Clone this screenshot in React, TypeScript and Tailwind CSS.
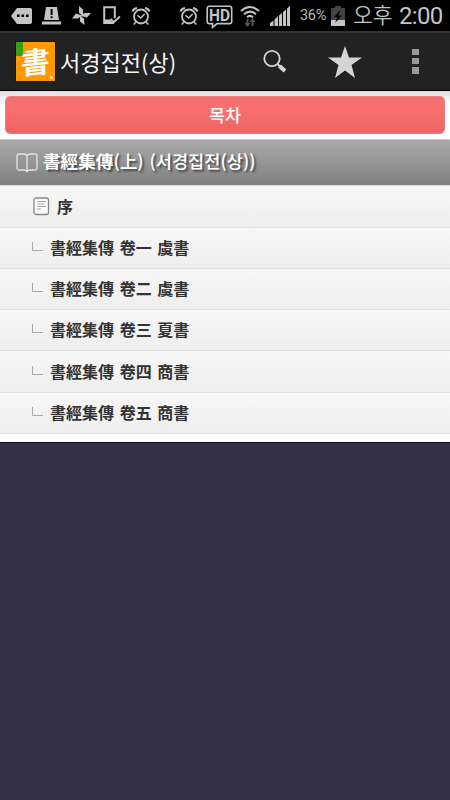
type RowProps = {
    title: string
    className: string
}

const volumes = [
    { title: "書經集傳 卷一 虞書", className: "h-[41px]" },
    { title: "書經集傳 卷二 虞書", className: "h-[41px]" },
    { title: "書經集傳 卷三 夏書", className: "h-[41px]" },
    { title: "書經集傳 卷四 商書", className: "h-[42px]" },
    { title: "書經集傳 卷五 商書", className: "h-[41px]" },
]

function AlarmIcon() {
    return (
        <svg className="shrink-0" width="20" height="20" viewBox="0 0 20 20" fill="none" stroke="#c4c4c4">
            <circle cx="10" cy="10.5" r="7" strokeWidth="1.8" />
            <path d="M6.5 9.2l3.2 2.8 4-4M4.8 16l-2 2.5M15.2 16l2 2.5" strokeWidth="1.5" />
            <path d="M1.5 5.5Q2.5 2.5 6 2M18.5 5.5Q17.5 2.5 14 2" strokeWidth="2" />
        </svg>
    )
}

function StatusBar() {
    return (
        <div className="flex items-center h-[33px] pl-[11px] bg-black border-b-2 border-[#333333]">
            <svg className="shrink-0" width="22" height="18" viewBox="0 0 22 18">
                <path d="M6 1h13q2 0 2 2v12q0 2-2 2H6L0 9z" fill="#c4c4c4" />
                <path d="M6 7.5h2.6v2.6H6zM10.5 7.5h2.6v2.6h-2.6zM15 7.5h2.6v2.6H15z" fill="#000" />
            </svg>
            <svg className="ml-[9px] shrink-0" width="19" height="18" viewBox="0 0 19 18">
                <path d="M4 0h11l2 13H2zM0 14.5h19v3H0z" fill="#c4c4c4" />
                <path d="M8.6 2h2v6h-2zM8.6 9.3h2v2h-2z" fill="#000" />
            </svg>
            <svg className="ml-[11px] shrink-0" width="19" height="19" viewBox="0 0 19 19">
                <path d="M7 0l4 3.5V10L7 7zM19 7l-4 4.5L9 10l3.5-3zM12.5 19L8 15.5V9.5l4 3zM0 12.5L4 7.5 10 9.5 6 12.5z" fill="#c4c4c4" />
            </svg>
            <svg className="ml-[12px] shrink-0" width="18" height="19" viewBox="0 0 18 19">
                <path d="M11 17H1.2V1.2h10.6v11" stroke="#c4c4c4" strokeWidth="2" fill="none" />
                <path d="M2 13.5h5l4 4.5H1z" fill="#c4c4c4" />
                <path d="M7.5 13l3.5 3 6-5.5" stroke="#c4c4c4" strokeWidth="1.8" fill="none" />
            </svg>
            <div className="flex ml-[10px]"><AlarmIcon /></div>
            <div className="flex ml-[28px]"><AlarmIcon /></div>
            <svg className="ml-[7px] mt-[2px] shrink-0" width="27" height="24" viewBox="0 0 27 24">
                <path d="M3.5 1.2h20q2.2 0 2.2 2.2v13q0 2.2-2.2 2.2H11l-4.5 3.8v-3.8h-3q-2.3 0-2.3-2.2v-13q0-2.2 2.3-2.2z" fill="none" stroke="#c4c4c4" strokeWidth="1.6" />
                <text x="13.5" y="15.6" textAnchor="middle" textLength="21" lengthAdjust="spacingAndGlyphs" fontFamily="Roboto, sans-serif" fontWeight="700" fontSize="16" fill="#c4c4c4">HD</text>
            </svg>
            <svg className="ml-[7px] shrink-0" width="20" height="22" viewBox="0 0 20 22" fill="none">
                <path d="M1 6Q10-2 19 6M4 9.3Q10 4 16 9.3M7 12.3Q10 9.5 13 12.3" stroke="#c4c4c4" strokeWidth="2" />
                <path d="M7.5 14v6M12.5 21v-6" stroke="#555" strokeWidth="2" />
                <path d="M4.5 18h6l-3 4zM9.5 17h6l-3-4z" fill="#555" />
            </svg>
            <svg className="ml-[10px] shrink-0" width="20" height="20" viewBox="0 0 20 20" fill="#c4c4c4">
                <path d="M0 20v-3l3.5-2.5V20zM4.5 20v-6.5L8 10v10zM9 20V9.5L12 7v13zM13 20V6l3-2.5V20zM17 20V2.5L20 0v20z" />
            </svg>
            <span className="ml-[10px] mt-[2px] w-[28px] whitespace-nowrap text-[14.5px] leading-none tracking-[-0.3px] text-[#b8b8b8] font-['Roboto',sans-serif]">36%</span>
            <svg className="ml-[3px] shrink-0" width="14" height="20" viewBox="0 0 14 20">
                <path d="M4 0h6v2h4v18H0V2h4z" fill="#444" />
                <path d="M0 14h14v6H0z" fill="#c4c4c4" />
                <path d="M9.5 4L3 11h3.5L4 17l7-7.5H7.5z" fill="#000" />
            </svg>
            <div className="flex items-center ml-[8px] h-[31px] whitespace-nowrap text-[#c4c4c4]">
                <span className="w-[46px] mb-[4px] text-[21.5px] leading-[30px] font-['Noto_Sans_CJK_KR',sans-serif] font-[350]">오후</span>
                <span className="text-[24px] leading-[30px] tracking-[-0.7px] font-['Roboto',sans-serif]">2:00</span>
            </div>
        </div>
    )
}

function ActionBar() {
    return (
        <header className="flex items-center h-[58px] pl-[15px] bg-[#222222] border-b border-black">
            <div className="relative shrink-0 w-[41px] h-[41px] bg-[#ff9900] border border-[#14142a]">
                <div className="w-[7px] h-[14px] bg-[#35a012]"></div>
                <span className="absolute left-[5px] top-0 text-[29px] leading-[36px] font-bold -skew-x-6 -rotate-6 text-white font-['Noto_Sans_CJK_TC',sans-serif]">書</span>
                <div className="absolute right-[2px] bottom-[2px] w-[3px] h-[3px] bg-[#fff0cc] rounded-full"></div>
            </div>
            <h1 className="ml-[4px] mb-px w-[203px] shrink-0 whitespace-nowrap text-[22px] leading-none text-[#f4f4f4] font-['Noto_Sans_CJK_KR',sans-serif]">서경집전(상)</h1>
            <svg className="shrink-0" width="25" height="25" viewBox="0 0 25 25" fill="none" stroke="#d4d4d4">
                <circle cx="9" cy="9.5" r="7.7" strokeWidth="1.8" />
                <path d="M14.5 15l3 3" strokeWidth="2" />
                <path d="M16.5 17l5.5 5" strokeWidth="4.2" />
            </svg>
            <svg className="ml-[40px] shrink-0" width="34" height="32" viewBox="0 0 34 32">
                <path d="M17 0l4 11.5h13L23.5 19 27 32 17 24.5 7 32l3.5-13L0 11.5h13z" fill="#d4d4d4" />
            </svg>
            <div className="flex flex-col gap-[3px] ml-[50px]">
                <div className="w-[7px] h-[6px] bg-[#999999]"></div>
                <div className="w-[7px] h-[6px] bg-[#999999]"></div>
                <div className="w-[7px] h-[7px] bg-[#999999]"></div>
            </div>
        </header>
    )
}

function Row({ title, className }: RowProps) {
    return (
        <li className={`flex items-center pl-[32px] border-b border-[#e0e0e0] bg-linear-to-b from-[#f7f7f7] to-[#eeeeee] ${className}`}>
            <div className="w-[11px] h-[9px] mb-[3px] border-l border-b border-[#aaaaaa]"></div>
            <span className="ml-[7px] mb-[2px] text-[16px] leading-none font-bold [word-spacing:2px] text-[#333333] whitespace-pre">{title}</span>
        </li>
    )
}

export default function App() {
    return (
        <div className="w-[450px] h-[800px] overflow-hidden bg-[#322f47]">
            <StatusBar />
            <ActionBar />
            <main className="h-[352px] bg-white border-b border-[#111122] font-['Noto_Sans_CJK_KR','Noto_Sans_CJK_TC',sans-serif]">
                <div className="h-[48px] px-[5px] pt-[5px] bg-linear-to-b from-[#dddddd] to-white to-25%">
                    <button className="block w-full h-[38px] pb-px rounded-[5px] border border-[#f47b7b] bg-linear-to-b from-[#ef7070] via-[#fa7070] via-30% to-[#ee6464] text-[17.5px] leading-none font-medium text-white">목차</button>
                </div>
                <div className="flex items-center h-[46px] pl-[16px] border-t border-[#cccccc] bg-linear-to-b from-[#aaaaaa] to-[#808080]">
                    <svg className="shrink-0" width="22" height="20" viewBox="0 0 22 20" fill="none" stroke="#e4e4e4" strokeWidth="1.3">
                        <path d="M11 3Q10 1 8 1H3Q1 1 1 3v12.5q0 1.5 2 1.5h5q2 0 3 1.5 1-1.5 3-1.5h5q2 0 2-1.5V3q0-2-2-2h-5q-2 0-3 2zM11 3v16" />
                    </svg>
                    <h2 className="ml-[5px] mb-[3px] whitespace-nowrap text-[17.6px] leading-none font-medium text-white [word-spacing:2px] [text-shadow:2px_2px_2px_#444444]"><b>書經集傳</b>(上) (서경집전(상))</h2>
                </div>
                <ul>
                    <li className="flex items-center h-[43px] pl-[33px] border-b border-t border-t-[#dddddd] border-b-[#e6e6e6] bg-linear-to-b from-[#f7f7f7] to-[#eeeeee]">
                        <svg className="shrink-0" width="17" height="19" viewBox="0 0 17 19" fill="none">
                            <rect x="1" y="1" width="14.5" height="16.5" rx="2" fill="#fafafa" stroke="#888" strokeWidth="1.3" />
                            <path d="M4 4.5h9M4 7h7M4 9.5h9M4 12h4" stroke="#aaa" />
                        </svg>
                        <span className="ml-[7px] mb-[2px] text-[16px] leading-none font-bold text-[#333333]">序</span>
                    </li>
                    {volumes.map((volume) => (
                        <Row key={volume.title} title={volume.title} className={volume.className} />
                    ))}
                </ul>
            </main>
        </div>
    )
}
